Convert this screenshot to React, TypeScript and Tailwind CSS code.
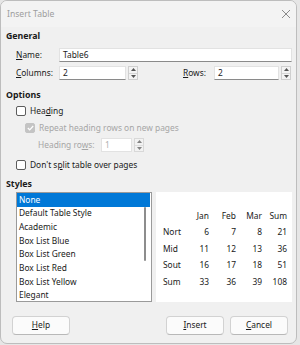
import React from 'react';

const STYLES = [
  'None',
  'Default Table Style',
  'Academic',
  'Box List Blue',
  'Box List Green',
  'Box List Red',
  'Box List Yellow',
  'Elegant',
];

const PREVIEW = [
  ['Nort', '6', '7', '8', '21'],
  ['Mid', '11', '12', '13', '36'],
  ['Sout', '16', '17', '18', '51'],
  ['Sum', '33', '36', '39', '108'],
];

const Spin: React.FC = () => (
  <div className="flex flex-col w-[10px] h-[14px] border border-[#cfcfcf] bg-[#f3f3f3]">
    <div className="flex-1 flex items-center justify-center">
      <svg width="5" height="3" viewBox="0 0 5 3">
        <path d="M0 3 L2.5 0 L5 3Z" fill="#555" />
      </svg>
    </div>
    <div className="h-px bg-[#d6d6d6]" />
    <div className="flex-1 flex items-center justify-center">
      <svg width="5" height="3" viewBox="0 0 5 3">
        <path d="M0 0 L2.5 3 L5 0Z" fill="#555" />
      </svg>
    </div>
  </div>
);

const Field: React.FC<{ value: string; width: string; disabled?: boolean }> = ({ value, width, disabled }) => (
  <div
    className={`${width} h-[14px] bg-white border border-[#e2e2e2] flex items-center pl-[3px] ${
      disabled ? 'text-[#b0b0b0]' : 'text-[#1a1a1a] border-b-[#8a8a8a]'
    }`}
  >
    {value}
  </div>
);

const CheckBox: React.FC<{ checked?: boolean }> = ({ checked }) => (
  <div
    className={`w-[10px] h-[10px] shrink-0 rounded-[2px] flex items-center justify-center ${
      checked ? 'bg-[#c4c4c4] border border-[#c4c4c4]' : 'bg-white border border-[#5c5c5c]'
    }`}
  >
    {checked && (
      <svg width="7" height="6" viewBox="0 0 7 6">
        <path d="M0.8 3 L2.7 4.8 L6.2 1" stroke="white" strokeWidth="1.2" fill="none" />
      </svg>
    )}
  </div>
);

const Button: React.FC<{ accel: string; rest: string }> = ({ accel, rest }) => (
  <div className="w-[58px] h-[19px] rounded-[4px] border border-[#d2d2d2] border-b-[#b8b8b8] bg-[#fbfbfb] flex items-center justify-center text-[#1a1a1a]">
    <span className="underline underline-offset-1">{accel}</span>
    {rest}
  </div>
);

export default function App() {
  return (
    <div className="w-[300px] h-[345px] bg-[#e6e6e6] font-['Noto_Sans',sans-serif] text-[8.4px] leading-none text-[#1a1a1a]">
      <div className="w-[297px] h-[344px] rounded-[7px] border border-[#bdbdbd] bg-[#f0f0f0] overflow-hidden flex flex-col">
        {/* Title bar */}
        <div className="h-[26px] shrink-0 bg-[#f3f3f3] flex items-center justify-between pl-[6px] pr-[5px]">
          <span className="text-[#9d9d9d] text-[8.6px]">Insert Table</span>
          <svg width="10" height="10" viewBox="0 0 10 10">
            <path d="M1 1 L9 9 M9 1 L1 9" stroke="#8a8a8a" strokeWidth="1" />
          </svg>
        </div>

        <div className="flex flex-col pl-[5px] pr-[4px]">
          {/* General */}
          <div className="h-[19px] flex items-center font-bold text-[8.8px]">General</div>
          <div className="h-[18px] flex items-center pl-[10px]">
            <span className="w-[43px]">
              <span className="underline underline-offset-1">N</span>ame:
            </span>
            <Field value="Table6" width="w-[233px]" />
          </div>
          <div className="h-[18px] flex items-center pl-[10px]">
            <span className="w-[43px]">
              <span className="underline underline-offset-1">C</span>olumns:
            </span>
            <Field value="2" width="w-[67px]" />
            <div className="ml-[2px]">
              <Spin />
            </div>
            <span className="ml-[45px] w-[31px]">
              <span className="underline underline-offset-1">R</span>ows:
            </span>
            <Field value="2" width="w-[65px]" />
            <div className="ml-[2px]">
              <Spin />
            </div>
          </div>

          {/* Options */}
          <div className="h-[16px] mt-[5px] flex items-center font-bold text-[8.8px]">Options</div>
          <div className="h-[16px] flex items-center pl-[10px] gap-[4px]">
            <CheckBox />
            <span>
              Hea<span className="underline underline-offset-1">d</span>ing
            </span>
          </div>
          <div className="h-[18px] flex items-center pl-[19px] gap-[4px] text-[#a6a6a6]">
            <CheckBox checked />
            <span className="whitespace-nowrap">Repeat heading rows on new pages</span>
          </div>
          <div className="h-[16px] flex items-center pl-[32px] text-[#a6a6a6]">
            <span className="w-[63px] whitespace-nowrap">
              Heading ro<span className="underline underline-offset-1">w</span>s:
            </span>
            <Field value="1" width="w-[31px]" disabled />
            <div className="ml-[2px] opacity-70">
              <Spin />
            </div>
          </div>
          <div className="h-[24px] flex items-center pl-[10px] gap-[4px]">
            <CheckBox />
            <span className="whitespace-nowrap">
              Don't s<span className="underline underline-offset-1">p</span>lit table over pages
            </span>
          </div>

          {/* Styles */}
          <div className="h-[14px] flex items-center font-bold text-[8.8px]">Styles</div>
          <div className="flex gap-[4px] pl-[10px] mt-[1px]">
            <div className="w-[137px] h-[110px] bg-white border border-[#9a9a9a] relative overflow-hidden">
              {STYLES.map((s, i) => (
                <div
                  key={s}
                  className={`h-[13.7px] flex items-center pl-[2px] ${
                    i === 0 ? 'bg-[#0078d7] text-white mr-[1px]' : 'text-[#1a1a1a]'
                  }`}
                >
                  {s}
                </div>
              ))}
              <div className="absolute right-[5px] top-[14px] w-[2px] h-[54px] bg-[#8d8d8d] rounded-full" />
            </div>
            <div className="w-[137px] h-[110px] bg-white pt-[20px] pl-[7px]">
              <div className="grid grid-cols-[24px_22px_27px_26px_25px] gap-y-[8px] text-[#1a1a1a]">
                <span />
                <span className="text-right">Jan</span>
                <span className="text-right">Feb</span>
                <span className="text-right">Mar</span>
                <span className="text-right">Sum</span>
                {PREVIEW.map((row) =>
                  row.map((c, j) => (
                    <span key={row[0] + j} className={j === 0 ? '' : 'text-right'}>
                      {c}
                    </span>
                  )),
                )}
              </div>
            </div>
          </div>

          {/* Buttons */}
          <div className="flex items-center mt-[14px] pl-[6px] pr-[4px]">
            <Button accel="H" rest="elp" />
            <div className="flex-1" />
            <Button accel="I" rest="nsert" />
            <div className="w-[6px]" />
            <Button accel="C" rest="ancel" />
          </div>
        </div>
      </div>
    </div>
  );
}
